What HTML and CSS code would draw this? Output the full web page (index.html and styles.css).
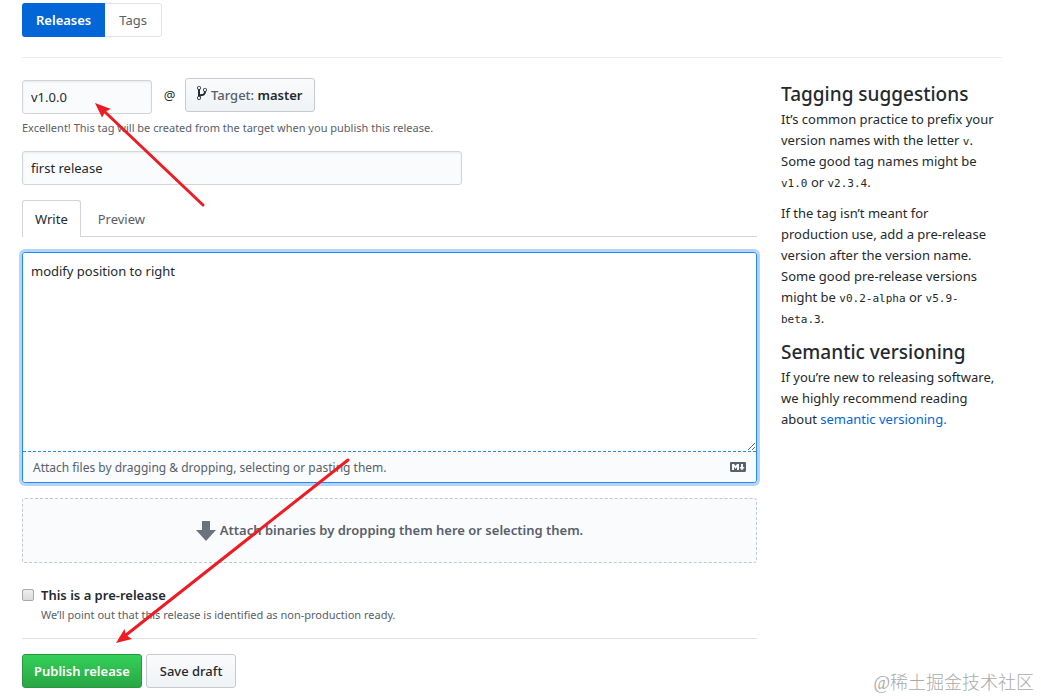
FILE: index.html
```html
<!DOCTYPE html>
<html lang="en">
<head>
<meta charset="utf-8">
<title>New release</title>
<link rel="stylesheet" href="styles.css">
</head>
<body>
<div class="page">
  <nav class="subnav">
    <a class="subnav-item selected" href="#releases">Releases</a>
    <a class="subnav-item" href="#tags">Tags</a>
  </nav>
  <div class="columns">
    <form class="release-form">
      <div class="tag-row">
        <input class="field tag-field" type="text" value="v1.0.0" aria-label="Tag version">
        <span class="at">@</span>
        <button class="btn target" type="button">
          <svg class="branch" viewBox="0 0 10 16" width="10" height="16" aria-hidden="true"><path fill="currentColor" fill-rule="evenodd" d="M10 5c0-1.11-.89-2-2-2a1.993 1.993 0 0 0-1 3.72v.3c-.02.52-.23.98-.63 1.38-.4.4-.86.61-1.38.63-.83.02-1.48.16-2 .45V4.72a1.993 1.993 0 0 0-1-3.72C.88 1 0 1.89 0 3a2 2 0 0 0 1 1.72v6.56c-.59.35-1 .99-1 1.72 0 1.11.89 2 2 2 1.11 0 2-.89 2-2 0-.53-.2-1-.53-1.36.09-.06.48-.41.59-.47.25-.11.56-.17.94-.17 1.05-.05 1.95-.45 2.75-1.25S8.950 7.77 9 6.730h-.02C9.590 6.370 10 5.730 10 5zM2 1.800c.66 0 1.200.55 1.200 1.200 0 .65-.55 1.200-1.200 1.200C1.350 4.200.8 3.650.8 3c0-.65.55-1.200 1.200-1.200zm0 12.410c-.66 0-1.200-.55-1.200-1.200 0-.65.55-1.200 1.200-1.200.65 0 1.200.55 1.200 1.200 0 .65-.55 1.200-1.200 1.200zm6-8c-.66 0-1.200-.55-1.200-1.200 0-.65.55-1.200 1.200-1.200.65 0 1.200.55 1.200 1.200 0 .65-.55 1.200-1.200 1.200z"/></svg>
          <span><span class="target-label">Target:</span> master</span>
        </button>
      </div>
      <p class="note">Excellent! This tag will be created from the target when you publish this release.</p>
      <input class="field title-field" type="text" value="first release" aria-label="Release title">
      <div class="tabs">
        <button class="tab active" type="button">Write</button>
        <button class="tab" type="button">Preview</button>
      </div>
      <div class="editor">
        <textarea class="editor-text" aria-label="Describe this release">modify position to right</textarea>
        <div class="editor-foot">
          <span>Attach files by dragging &amp; dropping, selecting or pasting them.</span>
          <svg viewBox="0 0 16 16" width="16" height="16" aria-hidden="true"><path fill="currentColor" fill-rule="evenodd" d="M14.850 3H1.150C.52 3 0 3.520 0 4.150v7.690C0 12.480.52 13 1.150 13h13.690c.64 0 1.150-.52 1.150-1.150v-7.700C16 3.520 15.480 3 14.850 3zM9 11H7V8L5.500 9.920 4 8v3H2V5h2l1.500 2L7 5h2v6zm2.990.5L9.500 8H11V5h2v3h1.500l-2.510 3.500z"/></svg>
        </div>
      </div>
      <div class="dropzone">
        <svg viewBox="0 0 20 20" width="20" height="20" aria-hidden="true"><path fill="currentColor" d="M6 0h8v9h6L10 20 0 9h6z"/></svg>
        <span>Attach binaries by dropping them here or selecting them.</span>
      </div>
      <div class="prerelease">
        <input class="check" type="checkbox" id="pre">
        <div>
          <label class="check-label" for="pre">This is a pre-release</label>
          <p class="hint">We’ll point out that this release is identified as non-production ready.</p>
        </div>
      </div>
      <div class="actions">
        <button class="btn primary" type="submit">Publish release</button>
        <button class="btn" type="button">Save draft</button>
      </div>
    </form>
    <aside class="help">
      <h2>Tagging suggestions</h2>
      <p>It’s common practice to prefix your version names with the letter <code>v</code>. Some good tag names might be <code>v1.0</code> or <code>v2.3.4</code>.</p>
      <p>If the tag isn’t meant for production use, add a pre-release version after the version name. Some good pre-release versions might be <code>v0.2-alpha</code> or <code>v5.9-beta.3</code>.</p>
      <h2>Semantic versioning</h2>
      <p>If you’re new to releasing software, we highly recommend reading about <a href="#semver">semantic versioning.</a></p>
    </aside>
  </div>
</div>
<svg class="arrows" viewBox="0 0 400 699" width="400" height="699" aria-hidden="true">
  <g stroke="#ed1c24" stroke-width="3" stroke-linecap="round"><path d="M203 205L105 112"/><path d="M348 460L126 635"/></g>
  <g fill="#ed1c24"><path d="M95 103L111 109L105.500 111.500L102 117.500Z"/><path d="M116 643L124.500 629L126 635L132 639Z"/></g>
</svg>
<div class="watermark">@稀土掘金技术社区</div>
</body>
</html>
```
FILE: styles.css
```css
* { box-sizing: border-box; }
body {
  margin: 0;
  background: #fff;
  color: #24292e;
  font: 13px/21px "Noto Sans", "Open Sans", sans-serif;
}
button, input, textarea { font: inherit; color: inherit; }
p, h2 { margin: 0; }
a { color: #0366d6; text-decoration: none; }
.page { padding: 3px 39px 0 22px; }
.subnav {
  display: flex;
  padding-bottom: 20px;
  border-bottom: 1px solid #eaecef;
}
.subnav-item {
  height: 34px;
  padding: 6px 14px;
  border: 1px solid #e1e4e8;
  border-left: 0;
  border-radius: 0 3px 3px 0;
  color: #586069;
}
.subnav-item.selected {
  border: 0;
  padding: 7px 14px;
  border-radius: 3px 0 0 3px;
  background: #0366d6;
  color: #fff;
  font-weight: 600;
}
.columns {
  display: grid;
  grid-template-columns: minmax(0, 3fr) minmax(0, 1fr);
  padding-top: 20px;
}
.tag-row { display: flex; align-items: flex-start; }
.field {
  height: 34px;
  padding: 6px 8px;
  border: 1px solid #d1d5da;
  border-radius: 3px;
  background: #fafbfc;
  box-shadow: inset 0 1px 2px rgba(27, 31, 35, .075);
}
.tag-field { width: 130px; margin-top: 2px; }
.at { width: 33px; padding: 7px 0 0 2px; text-align: center; }
.btn {
  height: 34px;
  padding: 0 13px;
  border: 1px solid #c6cacf;
  border-radius: 3px;
  background: linear-gradient(#fafbfc, #eff3f6);
  font-weight: 500;
}
.target {
  display: flex;
  align-items: center;
  gap: 4px;
  padding: 0 11px;
  font-weight: 600;
}
.target-label { color: #586069; font-weight: 500; }
.branch { margin-bottom: 4px; }
.note { padding: 3px 0 13px; font-size: 11px; line-height: 21px; color: #586069; }
.title-field { display: block; width: 440px; max-width: 100%; }
.tabs {
  display: flex;
  gap: 4px;
  margin-top: 15px;
  border-bottom: 1px solid #d1d5da;
}
.tab {
  height: 37px;
  margin-bottom: -1px;
  padding: 0 12px;
  border: 1px solid transparent;
  border-bottom: 0;
  background: none;
  color: #586069;
}
.tab.active {
  border-color: #d1d5da;
  border-radius: 3px 3px 0 0;
  background: #fff;
  color: #24292e;
}
.editor {
  margin-top: 15px;
  border: 1px solid #2188ff;
  border-radius: 3px;
  box-shadow: 0 0 0 3px #b5d5f8;
}
.editor-text {
  display: block;
  width: 100%;
  height: 199px;
  padding: 8px;
  border: 0;
  border-bottom: 1px dashed #2188ff;
  border-radius: 3px 3px 0 0;
  background: #fff;
  outline: 0;
  resize: vertical;
}
.editor-foot {
  display: flex;
  align-items: center;
  justify-content: space-between;
  height: 30px;
  padding: 0 10px;
  border-radius: 0 0 3px 3px;
  background: #fafbfc;
  color: #586069;
  font-size: 12px;
}
.dropzone {
  display: flex;
  align-items: center;
  justify-content: center;
  gap: 4px;
  height: 65px;
  margin-top: 15px;
  border: 1px dashed #c3c8cf;
  border-radius: 3px;
  background: #fafbfc;
  color: #586069;
  font-weight: 600;
}
.dropzone svg { color: #6a737d; }
.prerelease {
  display: flex;
  gap: 7px;
  padding: 22px 0 14px;
  border-bottom: 1px solid #dfe2e5;
}
.check {
  appearance: none;
  width: 12px;
  height: 12px;
  margin: 4px 0 0;
  border: 1px solid #a9a9a9;
  border-radius: 2px;
  background: linear-gradient(#eee, #dcdcdc);
}
.check-label { font-weight: 600; }
.hint { font-size: 11px; line-height: 18px; color: #586069; }
.actions { display: flex; gap: 4px; padding-top: 15px; }
.primary {
  padding: 0 11px;
  border-color: #28963f;
  background: linear-gradient(#34d058, #28a745);
  color: #fff;
  font-weight: 600;
}
.help { padding: 3px 5px 0 24px; }
.help h2 {
  margin-bottom: 2px;
  font-size: 19px;
  line-height: 26px;
  font-weight: 500;
}
.help p { margin-bottom: 10px; }
.help code { font: 11px/16px "DejaVu Sans Mono", monospace; }
.arrows { position: absolute; left: 0; top: 0; pointer-events: none; }
.watermark {
  position: absolute;
  right: 7px;
  bottom: 4px;
  color: #aaa;
  font: 300 18px/24px "Liberation Serif", "Noto Sans CJK SC", sans-serif;
}
```
